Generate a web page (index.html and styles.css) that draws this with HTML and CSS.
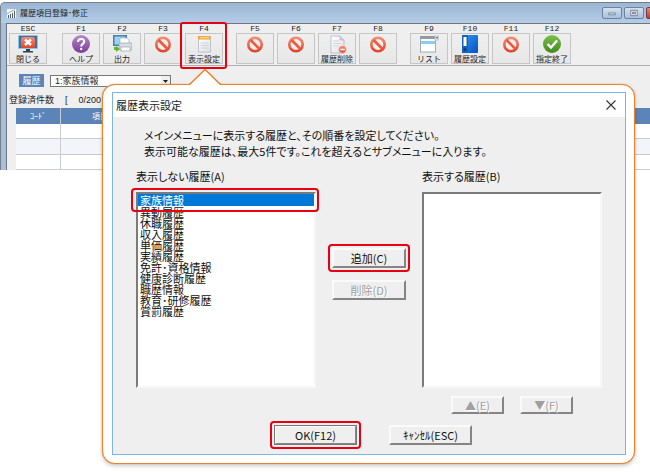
FILE: index.html
```html
<!DOCTYPE html>
<html lang="ja">
<head>
<meta charset="utf-8">
<title>履歴項目登録･修正</title>
<link rel="stylesheet" href="styles.css">
</head>
<body>
<svg class="defs" aria-hidden="true">
  <defs>
    <linearGradient id="gRed" x1="0" y1="0" x2="0" y2="1"><stop offset="0" stop-color="#f58a72"/><stop offset="1" stop-color="#e2452c"/></linearGradient>
    <linearGradient id="gPurple" x1="0" y1="0" x2="0" y2="1"><stop offset="0" stop-color="#b48cc8"/><stop offset="1" stop-color="#7b3a98"/></linearGradient>
    <linearGradient id="gGreen" x1="0" y1="0" x2="0" y2="1"><stop offset="0" stop-color="#7dc04a"/><stop offset="1" stop-color="#3f8a1c"/></linearGradient>
    <linearGradient id="gBlue" x1="0" y1="0" x2="1" y2="1"><stop offset="0" stop-color="#2f9bf2"/><stop offset="1" stop-color="#0a4fc0"/></linearGradient>
    <linearGradient id="gPage" x1="0" y1="0" x2="1" y2="1"><stop offset="0" stop-color="#ffffff"/><stop offset="1" stop-color="#dde1e6"/></linearGradient>
    <symbol id="ban" viewBox="0 0 20 20"><circle cx="10" cy="10.5" r="6.7" fill="#fbeeea" stroke="url(#gRed)" stroke-width="2.6"/><path d="M5.5 6 14.5 15" stroke="#ea5a41" stroke-width="2.6"/></symbol>
  </defs>
</svg>

<main class="page">
  <section class="window">
    <header class="titlebar">
      <svg class="app-icon" viewBox="0 0 9 9"><rect width="9" height="9" fill="#f5f7f8"/><path d="M1.5 9V6M3.5 9V5M5.5 9V4M7.5 9V2" stroke="#555f66"/><path d="M0 5 4 2.5 8 .5" stroke="#78848c" stroke-width=".7" fill="none"/></svg>
      <h1 class="window-title">履歴項目登録･修正</h1>
      <div class="window-controls">
        <button class="win-btn" aria-label="最小化"><svg viewBox="0 0 20 11"><rect x="6.500" y="5.500" width="7" height="2" fill="#fff" stroke="#6d7b8d"/></svg></button>
        <button class="win-btn" aria-label="最大化"><svg viewBox="0 0 20 11"><rect x="6.500" y="2.500" width="7" height="6" fill="#fff" stroke="#6d7b8d"/><rect x="8.500" y="4.500" width="3" height="2" fill="#9fb4cc" stroke="#6d7b8d"/></svg></button>
        <button class="win-btn win-close" aria-label="閉じる"><svg viewBox="0 0 20 11"><path d="M7 3 13 8M13 3 7 8" stroke="#fff" stroke-width="1.600"/></svg></button>
      </div>
    </header>

    <div class="client">
      <nav class="toolbar" aria-label="ファンクションキー">
        <div class="tool-group">
          <div class="tool"><span class="key">ESC</span><button class="tool-btn">
            <svg viewBox="0 0 20 20"><rect x="0" y="1" width="20" height="14" rx="1" fill="#8ec4e4"/><rect x="1" y="2" width="18" height="12" fill="#3b7299"/><rect x="3" y="3" width="14" height="11" rx="2" fill="url(#gRed)"/><path d="M7 5.500 13 11M13 5.500 7 11" stroke="#fff" stroke-width="2.400"/><path d="M8 15h4v2h3v1.500H5V17h3z" fill="#37424b"/></svg>
            <span>閉じる</span></button></div>
        </div>
        <div class="tool-group">
          <div class="tool"><span class="key">F1</span><button class="tool-btn">
            <svg viewBox="0 0 20 20"><circle cx="10" cy="10" r="9" fill="url(#gPurple)"/><path d="M7 8c0-4 6.200-4 6.200-.5 0 2.500-3 2.300-3 5" fill="none" stroke="#fff" stroke-width="2"/><circle cx="10.200" cy="15" r="1.200" fill="#fff"/></svg>
            <span>ヘルプ</span></button></div>
          <div class="tool"><span class="key">F2</span><button class="tool-btn">
            <svg viewBox="0 0 20 20"><rect x="1" y="1" width="14" height="11" fill="#4b7da8"/><rect x="2.500" y="2.500" width="11" height="8" fill="#9bd4f3"/><path d="M8 4h7l2 2v5H8z" fill="#fff" stroke="#9aa6b0" stroke-width=".6"/><rect x="7" y="9" width="13" height="7" rx="1" fill="#d8dee3" stroke="#8696a3" stroke-width=".6"/><rect x="9" y="13" width="9" height="4" fill="#fff" stroke="#8b98a2" stroke-width=".6"/><path d="M2 13v3h2v2l4-3-4-3v1z" fill="#62b52c"/></svg>
            <span>出力</span></button></div>
          <div class="tool"><span class="key">F3</span><button class="tool-btn" aria-label="F3"><svg viewBox="0 0 20 20"><use href="#ban"/></svg></button></div>
          <div class="tool marked"><span class="key">F4</span><button class="tool-btn">
            <svg viewBox="0 0 20 20"><path d="M4.500 3h12v15h-12z" fill="url(#gPage)" stroke="#b3b8bd" stroke-width=".8"/><rect x="4" y="2" width="12.500" height="3.500" fill="#f2a93b"/><rect x="6" y="3.200" width="9" height="1" fill="#ffe1a6"/><path d="M6.500 9h8M6.500 11.500h8M6.500 14h8" stroke="#c6ccd2" stroke-width=".8"/></svg>
            <span>表示設定</span></button></div>
        </div>
        <div class="tool-group">
          <div class="tool"><span class="key">F5</span><button class="tool-btn" aria-label="F5"><svg viewBox="0 0 20 20"><use href="#ban"/></svg></button></div>
          <div class="tool"><span class="key">F6</span><button class="tool-btn" aria-label="F6"><svg viewBox="0 0 20 20"><use href="#ban"/></svg></button></div>
          <div class="tool"><span class="key">F7</span><button class="tool-btn">
            <svg viewBox="0 0 20 20"><path d="M4 2h9l4 4v13H4z" fill="url(#gPage)" stroke="#aeb4ba" stroke-width=".8"/><path d="M13 2v4h4" fill="#cdd2d7" stroke="#aeb4ba" stroke-width=".6"/><path d="M6 7h6M6 9.500h8M6 12h6" stroke="#c6ccd2" stroke-width=".8"/><circle cx="15.500" cy="15.500" r="3.800" fill="url(#gRed)" stroke="#f6d0c8" stroke-width=".7"/><path d="M13.300 15.500h4.400" stroke="#fff" stroke-width="1.600"/></svg>
            <span>履歴削除</span></button></div>
          <div class="tool"><span class="key">F8</span><button class="tool-btn" aria-label="F8"><svg viewBox="0 0 20 20"><use href="#ban"/></svg></button></div>
        </div>
        <div class="tool-group">
          <div class="tool"><span class="key">F9</span><button class="tool-btn">
            <svg viewBox="0 0 20 20"><rect x="1.500" y="2.500" width="15" height="15.500" fill="#fff" stroke="#8e979f" stroke-width=".8"/><rect x="1.500" y="2" width="15" height="3" fill="#929ba4"/><rect x="2" y="7" width="14" height="3" fill="#8fcaf5"/><rect x="16" y="2" width="4" height="4" fill="#eceef0" stroke="#a3aab0" stroke-width=".6"/><path d="M16.800 3.300h2.600l-1.300 1.600z" fill="#444"/></svg>
            <span>リスト</span></button></div>
          <div class="tool"><span class="key">F10</span><button class="tool-btn">
            <svg viewBox="0 0 20 20"><rect x="2" y="1" width="16" height="18" rx="1" fill="url(#gBlue)"/><rect x="2" y="1" width="6" height="18" fill="#1762b8"/><rect x="3.500" y="3" width="3" height="9" fill="#fff"/><circle cx="5" cy="15.500" r="1.300" fill="#0b3572"/></svg>
            <span>履歴設定</span></button></div>
          <div class="tool"><span class="key">F11</span><button class="tool-btn" aria-label="F11"><svg viewBox="0 0 20 20"><use href="#ban"/></svg></button></div>
          <div class="tool"><span class="key">F12</span><button class="tool-btn">
            <svg viewBox="0 0 20 20"><circle cx="10" cy="10" r="9" fill="url(#gGreen)"/><path d="M5.500 10 9 13.500 15 6.500" fill="none" stroke="#fff" stroke-width="2.400"/></svg>
            <span>指定終了</span></button></div>
        </div>
      </nav>

      <div class="filter">
        <label class="filter-label" for="history">履歴</label>
        <span class="combo">
          <select id="history"><option>1:家族情報</option></select>
          <svg class="combo-arrow" viewBox="0 0 9 10"><path d="M2 4h5l-2.500 3z" fill="#222"/></svg>
        </span>
      </div>
      <p class="count"><span>登録済件数</span><span>[</span><span>0/200</span></p>
      <table class="grid">
        <thead><tr><th class="col-code">ｺｰﾄﾞ</th><th class="col-item">項目</th></tr></thead>
        <tbody><tr><td></td><td></td></tr><tr><td></td><td></td></tr><tr><td></td><td></td></tr></tbody>
      </table>
    </div>
  </section>

  <section class="callout">
    <svg class="pointer" viewBox="0 0 32 18"><path d="M1 16 16 1.500 31 16V18H1z" fill="#fff"/><path d="M0 16h1L16 1.500 31 16h1" fill="none" stroke="#ee8027" stroke-width="1.500"/></svg>
    <div class="dialog" role="dialog" aria-labelledby="dlg-title">
      <header class="dialog-head">
        <h2 id="dlg-title">履歴表示設定</h2>
        <button class="dialog-close" aria-label="閉じる"><svg viewBox="0 0 10 10"><path d="M.5.5 9.500 9.500M9.500.5.5 9.500" stroke="#333" stroke-width="1.100"/></svg></button>
      </header>
      <form class="dialog-body">
        <p class="message">メインメニューに表示する履歴と、その順番を設定してください。<br>表示可能な履歴は、最大5件です。これを超えるとサブメニューに入ります。</p>
        <div class="lists">
          <div class="list-col">
            <label for="hidden-list">表示しない履歴(A)</label>
            <div class="list-frame">
              <select id="hidden-list" size="17">
                <option selected>家族情報</option>
                <option>異動履歴</option>
                <option>休職履歴</option>
                <option>収入履歴</option>
                <option>単価履歴</option>
                <option>実績履歴</option>
                <option>免許･資格情報</option>
                <option>健康診断履歴</option>
                <option>職歴情報</option>
                <option>教育･研修履歴</option>
                <option>賞罰履歴</option>
              </select>
            </div>
          </div>
          <div class="move">
            <span class="ring"><button type="button" class="btn">追加(C)</button></span>
            <button type="button" class="btn" disabled>削除(D)</button>
          </div>
          <div class="list-col">
            <label for="shown-list">表示する履歴(B)</label>
            <select id="shown-list" size="17"></select>
          </div>
        </div>
        <div class="order">
          <button type="button" class="btn" disabled>▲(E)</button>
          <button type="button" class="btn" disabled>▼(F)</button>
        </div>
        <div class="actions">
          <span class="ring"><button type="button" class="btn btn-default">OK(F12)</button></span>
          <button type="button" class="btn">ｷｬﾝｾﾙ(ESC)</button>
        </div>
      </form>
    </div>
  </section>
</main>
</body>
</html>
```
FILE: styles.css
```css
* { box-sizing: border-box; }

body {
  margin: 0;
  background: #fff;
  color: #1c1c1c;
  font-family: "Liberation Sans", "Noto Sans CJK JP", sans-serif;
  font-size: 11px;
}

h1, h2, p { margin: 0; font-weight: 400; }

button, select { font: inherit; color: inherit; margin: 0; padding: 0; }

svg { display: block; }

.defs { position: absolute; width: 0; height: 0; }

.page {
  position: relative;
  min-height: 100vh;
  padding-top: 2px;
  overflow: hidden;
}

/* Main window */

.window {
  margin-right: -20px;
  padding-left: 5px;
  border: 1px solid #777e87;
  border-width: 1px 0 0 1px;
  border-radius: 5px 0 0 0;
  background: #a6c0dc;
}

.titlebar {
  display: flex;
  align-items: center;
  height: 20px;
  margin-left: -5px;
  padding-left: 6px;
  border-radius: 4px 0 0 0;
  background: linear-gradient(#9bb6d3, #b5cde7);
}

.app-icon { width: 9px; height: 9px; }

.window-title {
  flex: 1;
  margin-left: 4px;
  font-family: "Noto Sans CJK JP", sans-serif;
  font-size: 8px;
  line-height: 12px;
}

.window-controls { display: flex; gap: 2px; padding-right: 4px; }

.win-btn {
  width: 20px;
  height: 12px;
  border: 1px solid #6f8299;
  border-radius: 2px;
  background: linear-gradient(#d3e1f0, #a8c0da);
}

.win-btn svg { width: 100%; height: 100%; }

.win-close { border-color: #7c3a35; background: linear-gradient(#df8a7c, #c03c28); }

.client { border-top: 1px solid #70767e; border-left: 1px solid #70767e; background: #efefef; }

.toolbar {
  display: flex;
  gap: 13px;
  height: 42px;
  padding-left: 2px;
  border-bottom: 1px solid #b0b0b0;
}

.tool-group { display: flex; gap: 3px; }

.tool-group:first-child { margin-right: 2px; }

.tool { position: relative; width: 38px; }

.key {
  display: block;
  font-family: "Liberation Mono", monospace;
  font-size: 8px;
  line-height: 9px;
  text-align: center;
}

.tool-btn {
  display: flex;
  flex-direction: column;
  align-items: center;
  width: 100%;
  height: 31px;
  border: 1px solid #c6c6c6;
  background: linear-gradient(#efefef, #e7e7e7);
  font-family: "Noto Sans CJK JP", sans-serif;
  font-size: 8px;
  line-height: 9px;
  white-space: nowrap;
}

.tool-btn:not([aria-label]) { justify-content: center; }

.tool-btn svg { width: 20px; height: 20px; flex: none; }

.marked::after {
  content: "";
  position: absolute;
  inset: -2px -4px -4px -5px;
  border: 2px solid #e60012;
  border-radius: 3px;
}

.filter { display: flex; align-items: center; gap: 6px; padding: 8px 0 0 12px; }

.filter-label {
  width: 25px;
  background: #5b84b9;
  color: #fff;
  font-family: "Noto Sans CJK JP", sans-serif;
  font-size: 9px;
  line-height: 13px;
  text-align: center;
}

.combo { position: relative; width: 121px; }

.combo select {
  display: block;
  width: 100%;
  height: 12px;
  padding-left: 4px;
  appearance: none;
  border: 1px solid #777;
  border-radius: 0;
  background: #fff;
  font-size: 9px;
  line-height: 10px;
}

.combo-arrow { position: absolute; top: 1px; right: 1px; width: 9px; height: 10px; background: #efefef; }

.count {
  display: flex;
  gap: 11px;
  padding: 5px 0 0 2px;
  font-size: 9px;
  line-height: 16px;
}

.grid {
  width: 100%;
  padding-left: 9px;
  border-collapse: separate;
  border-spacing: 0;
  table-layout: fixed;
}

.grid th { height: 16px; padding: 0; background: #5b84b9; color: #fff; font-size: 8px; font-weight: 400; line-height: 15px; }

.grid td { height: 15px; padding: 0; border-bottom: 1px solid #c9cdd3; background: #fff; }

.grid tr:nth-child(even) td { height: 16px; background: #f3f5fa; }

.grid th:first-child, .grid td:first-child { border-right: 1px solid #c9cdd3; }

.col-code { width: 45px; }

.grid .col-item { padding-left: 31px; text-align: left; }

/* Enlarged dialog */

.callout {
  position: absolute;
  top: 84px;
  left: 102px;
  right: 15px;
  padding: 7px 8px 8px 9px;
  border: 1px solid #ee8027;
  border-radius: 13px;
  background: #fff;
  box-shadow: 0 0 1px #ee8027, 0 2px 4px rgba(0, 0, 0, .2);
}

.pointer { position: absolute; top: -17px; left: 86px; width: 32px; height: 18px; }

.dialog { border: 1px solid #7ab5e6; background: #efefef; font-family: "Noto Sans CJK JP", sans-serif; font-feature-settings: "palt"; }

.dialog-head {
  display: flex;
  align-items: center;
  justify-content: space-between;
  height: 24px;
  padding: 0 9px 0 3px;
  background: #fff;
}

.dialog-head h2 { font-size: 11px; line-height: 16px; }

.dialog-close { width: 10px; height: 10px; border: 0; background: none; }

.dialog-body { padding: 10px 23px 9px; color: #111; }

.message { padding-left: 8px; line-height: 16px; }

.lists { display: grid; grid-template-columns: 1fr 106px 1fr; margin-top: 9px; }

.list-col { display: flex; flex-direction: column; gap: 8px; }

.list-col label { line-height: 16px; }

.list-col select {
  display: block;
  width: 100%;
  height: 196px;
  padding: 0;
  border: 2px solid;
  border-color: #7b7b7b #f7f7f7 #f7f7f7 #7b7b7b;
  border-radius: 0;
  background: #fff;
  overflow: hidden;
  font-size: 11px;
}

.list-col option {
  display: flex;
  align-items: center;
  height: 11px;
  min-height: 0;
  padding: 0 2px;
  line-height: 11px;
}

.list-col option:checked { height: 12px; background: linear-gradient(#0078d7, #0078d7); color: #fff; }

.list-frame { position: relative; }

.list-frame::after {
  content: "";
  position: absolute;
  inset: -4px -3px auto -5px;
  height: 20px;
  border: 2px solid #e60012;
  border-radius: 4px;
}

.move { display: flex; flex-direction: column; align-items: center; gap: 12px; padding-top: 80px; }

.move .btn { width: 74px; height: 20px; }

.btn {
  display: block;
  border: 2px solid;
  border-color: #fafafa #858585 #858585 #fafafa;
  background: #efefef;
  line-height: 14px;
  white-space: nowrap;
}

.btn:disabled { color: #a0a0a0; text-shadow: 1px 1px #fff; }

.ring { position: relative; display: block; }

.ring::after {
  content: "";
  position: absolute;
  inset: -4px;
  border: 2px solid #e60012;
  border-radius: 4px;
  pointer-events: none;
}

.order { display: flex; justify-content: flex-end; gap: 16px; margin-top: 8px; padding-right: 29px; }

.order .btn { width: 53px; height: 18px; }

.actions { display: flex; justify-content: center; gap: 32px; margin-top: 11px; padding-left: 8px; }

.actions .btn { width: 83px; height: 20px; }

.btn-default { outline: 1px solid #777; outline-offset: -1px; }
```
